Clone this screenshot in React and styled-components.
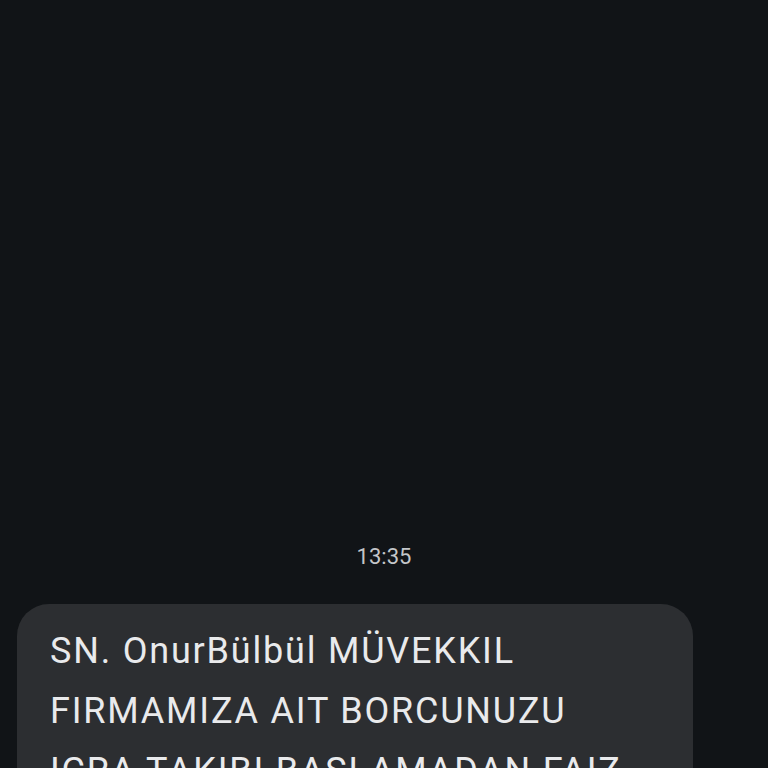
import React from "react";
import styled, { createGlobalStyle } from "styled-components";

const GlobalStyle = createGlobalStyle`
  html, body {
    margin: 0;
    padding: 0;
    background: #111417;
  }
`;

const Screen = styled.div`
  height: 768px;
  overflow: hidden;
  background: #111417;
  font-family: Roboto, "Noto Sans", sans-serif;
  display: flex;
  flex-direction: column;
  padding-top: 544px;
  box-sizing: border-box;
`;

const Stamp = styled.div`
  text-align: center;
  color: #c4c6c9;
  font-size: 22px;
  line-height: 26px;
  margin-bottom: 34px;
`;

const Bubble = styled.div`
  margin-left: 17px;
  width: 676px;
  box-sizing: border-box;
  background: #2c2e31;
  border-radius: 32px;
  padding: 17px 33px 24px;
  color: #e9eaec;
  font-size: 36px;
  line-height: 60px;
  letter-spacing: 1.8px;
`;

const messages = [
  {
    time: "13:35",
    text: [
      "SN. OnurBülbül MÜVEKKIL",
      "FIRMAMIZA AIT BORCUNUZU",
      "ICRA TAKIBI BASLAMADAN FAIZ",
      "VE MASRAFLARDAN KURTULMAK",
    ],
  },
];

export default function App() {
  return (
    <>
      <GlobalStyle />
      <Screen>
        {messages.map((m) => (
          <React.Fragment key={m.time}>
            <Stamp>{m.time}</Stamp>
            <Bubble>
              {m.text.map((line) => (
                <div key={line}>{line}</div>
              ))}
            </Bubble>
          </React.Fragment>
        ))}
      </Screen>
    </>
  );
}
